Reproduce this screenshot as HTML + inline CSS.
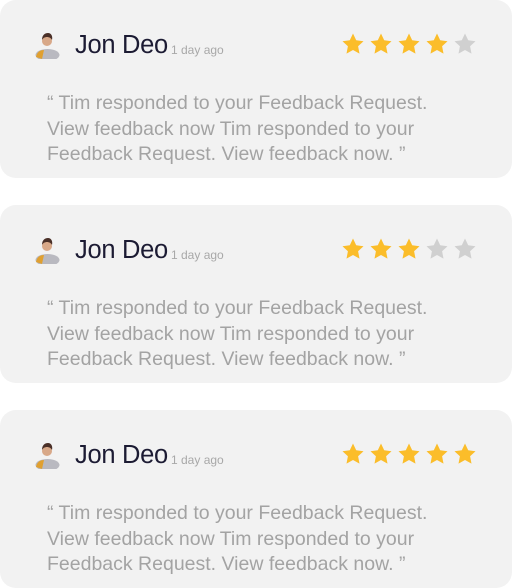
<!DOCTYPE html>
<html><head><style>
body{margin:0;width:512px;height:588px;background:#fff;font-family:"Liberation Sans",sans-serif;position:relative;overflow:hidden}
.card{position:absolute;left:0;width:512px;height:178px;background:#f2f2f2;border-radius:16px}
.av{position:absolute;left:34px;top:31px;width:27px;height:28px}
.name{position:absolute;left:75px;top:31px;font-size:25.5px;color:#1c1b33;letter-spacing:-0.3px}
.ago{position:absolute;left:171px;top:43px;font-size:12px;color:#a8a8a8}
.stars{position:absolute;left:341px;top:32px;display:flex;gap:4px}
.txt{position:absolute;left:47px;top:91px;width:400px;font-size:19.5px;line-height:25.5px;color:#a3a3a3}
</style></head><body>
<svg width="0" height="0" style="position:absolute"><defs>
<symbol id="s" viewBox="0 0 24 24"><path d="M12 1.5l3.2 6.8 7.3.9-5.4 5.1 1.4 7.3L12 18l-6.5 3.6 1.4-7.3L1.5 9.2l7.3-.9z"/></symbol>
<symbol id="a" viewBox="0 0 27 28"><ellipse cx="13.5" cy="24" rx="12" ry="6" fill="#b9b9c0"/><path d="M2 26c1-5 4-7 8-7l-2 9z" fill="#e0a030"/><circle cx="13" cy="10" r="5" fill="#d8a888"/><path d="M8 9c0-5 3-7 6-7s5 3 4 7c-1-2-3-3-5-3s-4 1-5 3z" fill="#4a3028"/></symbol>
</defs></svg>
<div class="card" style="top:0"><svg class="av"><use href="#a"/></svg><div class="name">Jon Deo</div><div class="ago">1 day ago</div>
<div class="stars"><svg width="24" height="24" fill="#fbbd2a"><use href="#s"/></svg><svg width="24" height="24" fill="#fbbd2a"><use href="#s"/></svg><svg width="24" height="24" fill="#fbbd2a"><use href="#s"/></svg><svg width="24" height="24" fill="#fbbd2a"><use href="#s"/></svg><svg width="24" height="24" fill="#d0d0d0"><use href="#s"/></svg></div>
<div class="txt">“ Tim responded to your Feedback Request.<br>View feedback now Tim responded to your<br>Feedback Request. View feedback now. ”</div></div>
<div class="card" style="top:205px"><svg class="av"><use href="#a"/></svg><div class="name">Jon Deo</div><div class="ago">1 day ago</div>
<div class="stars"><svg width="24" height="24" fill="#fbbd2a"><use href="#s"/></svg><svg width="24" height="24" fill="#fbbd2a"><use href="#s"/></svg><svg width="24" height="24" fill="#fbbd2a"><use href="#s"/></svg><svg width="24" height="24" fill="#d0d0d0"><use href="#s"/></svg><svg width="24" height="24" fill="#d0d0d0"><use href="#s"/></svg></div>
<div class="txt">“ Tim responded to your Feedback Request.<br>View feedback now Tim responded to your<br>Feedback Request. View feedback now. ”</div></div>
<div class="card" style="top:410px"><svg class="av"><use href="#a"/></svg><div class="name">Jon Deo</div><div class="ago">1 day ago</div>
<div class="stars"><svg width="24" height="24" fill="#fbbd2a"><use href="#s"/></svg><svg width="24" height="24" fill="#fbbd2a"><use href="#s"/></svg><svg width="24" height="24" fill="#fbbd2a"><use href="#s"/></svg><svg width="24" height="24" fill="#fbbd2a"><use href="#s"/></svg><svg width="24" height="24" fill="#fbbd2a"><use href="#s"/></svg></div>
<div class="txt">“ Tim responded to your Feedback Request.<br>View feedback now Tim responded to your<br>Feedback Request. View feedback now. ”</div></div>
</body></html>
